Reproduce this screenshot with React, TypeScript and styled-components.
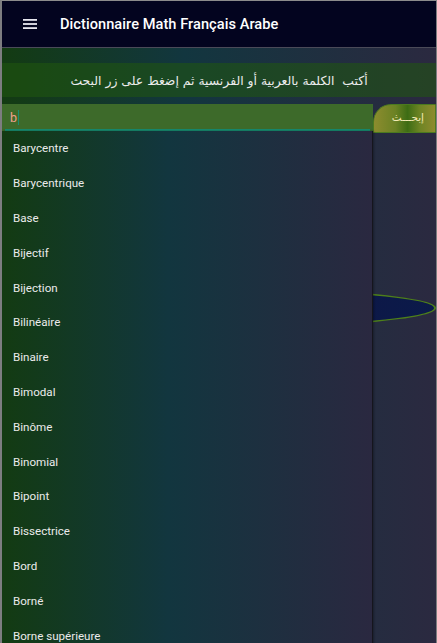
import React from "react";
import styled, { createGlobalStyle } from "styled-components";

const Global = createGlobalStyle`
  html, body { margin: 0; padding: 0; background: #ffffff; }
  * { box-sizing: border-box; }
`;

const Frame = styled.div`
  width: 437px;
  height: 643px;
  overflow: hidden;
  border-top: 1px solid #8c8c8c;
  border-left: 2px solid #7d7d80;
  border-right: 1px solid #7d7d80;
  display: flex;
  flex-direction: column;
  font-family: Roboto, "Liberation Sans", sans-serif;
  background: #02031f;
`;

const AppBar = styled.header`
  height: 47px;
  flex: none;
  background: #03041f;
  border-bottom: 1px solid #4a4a58;
  display: flex;
  align-items: center;
  padding-left: 19px;
  gap: 21px;
`;

const MenuButton = styled.div`
  width: 18px;
  height: 18px;
  display: flex;
  align-items: center;
  justify-content: center;
`;

const Title = styled.h1`
  margin: 0;
  font-size: 14.6px;
  font-weight: 500;
  color: #ffffff;
  letter-spacing: 0.05px;
`;

const Main = styled.main`
  position: relative;
  flex: 1;
  display: flex;
  flex-direction: column;
  padding-top: 15px;
  background: linear-gradient(to right, #133b12 0%, #12363f 42%, #2b2940 100%);
`;

const Banner = styled.div`
  height: 34px;
  background: rgba(32, 88, 14, 0.55);
  display: flex;
  align-items: center;
  justify-content: center;
  direction: rtl;
  font-family: "DejaVu Sans", sans-serif;
  font-size: 12.4px;
  color: #ececec;
`;

const SearchRow = styled.div`
  margin-top: 7px;
  height: 29px;
  display: flex;
`;

const InputBox = styled.div`
  flex: 1;
  background: #3d6a2a;
  padding: 0 3px 0 3px;
  display: flex;
  flex-direction: column;
  justify-content: flex-end;
`;

const InputText = styled.div`
  height: 23px;
  display: flex;
  align-items: center;
  padding-left: 5px;
  font-size: 12.5px;
  color: #f2a08a;
`;

const Caret = styled.span`
  display: inline-block;
  width: 1px;
  height: 15px;
  margin-left: 1px;
  background: #1b8c70;
`;

const Underline = styled.div`
  height: 2px;
  background: #178a6e;
  margin-bottom: 2px;
`;

const SearchButton = styled.div`
  flex: none;
  width: 63px;
  height: 29px;
  padding: 0 11px 3px 0;
  border: 1px solid #4b7a1f;
  border-top-left-radius: 18px;
  background: linear-gradient(to right, #8c8c2e 0%, #6b8224 35%, #3d6c14 55%, #6d8424 75%, #8e8b2e 100%);
  display: flex;
  align-items: center;
  justify-content: flex-end;
  font-family: "DejaVu Sans", sans-serif;
  font-size: 10.5px;
  color: #f3eab4;
  cursor: pointer;
`;

const ResultOval = styled.div`
  margin: 155px 0 0 0;
  height: 40px;
  border: 2px solid #4d7f1a;
  border-radius: 50%;
  background: linear-gradient(to right, #150f3a, #0b1a4a);
`;

const Suggestions = styled.ul`
  position: absolute;
  top: 83px;
  left: 0;
  width: 371px;
  height: 600px;
  margin: 0;
  padding: 0;
  list-style: none;
  background: linear-gradient(to right, #133b12 0%, #12363f 45%, #2a2840 100%);
  border-right: 1px solid #15151d;
  box-shadow: 1px 0 2px rgba(0, 0, 0, 0.35);
  z-index: 2;
`;

const Suggestion = styled.li`
  height: 34.8px;
  display: flex;
  align-items: center;
  padding-left: 11px;
  font-size: 11.6px;
  color: #ebebeb;
`;

const words = [
  "Barycentre",
  "Barycentrique",
  "Base",
  "Bijectif",
  "Bijection",
  "Bilinéaire",
  "Binaire",
  "Bimodal",
  "Binôme",
  "Binomial",
  "Bipoint",
  "Bissectrice",
  "Bord",
  "Borné",
  "Borne supérieure",
];

export default function App() {
  return (
    <>
      <Global />
      <Frame>
        <AppBar>
          <MenuButton>
            <svg width="14" height="10" viewBox="0 0 14 10">
              <rect x="0" y="0" width="14" height="1.8" fill="#e6e6ee" />
              <rect x="0" y="4.1" width="14" height="1.8" fill="#e6e6ee" />
              <rect x="0" y="8.2" width="14" height="1.8" fill="#e6e6ee" />
            </svg>
          </MenuButton>
          <Title>Dictionnaire Math Français Arabe</Title>
        </AppBar>
        <Main>
          <Banner>أكتب&nbsp; الكلمة بالعربية أو الفرنسية ثم إضغط على زر البحث</Banner>
          <SearchRow>
            <InputBox>
              <InputText>
                b<Caret />
              </InputText>
              <Underline />
            </InputBox>
            <SearchButton role="button">
              <span dir="rtl">إبحـــث</span>
            </SearchButton>
          </SearchRow>
          <ResultOval />
          <Suggestions>
            {words.map((w) => (
              <Suggestion key={w}>{w}</Suggestion>
            ))}
          </Suggestions>
        </Main>
      </Frame>
    </>
  );
}
